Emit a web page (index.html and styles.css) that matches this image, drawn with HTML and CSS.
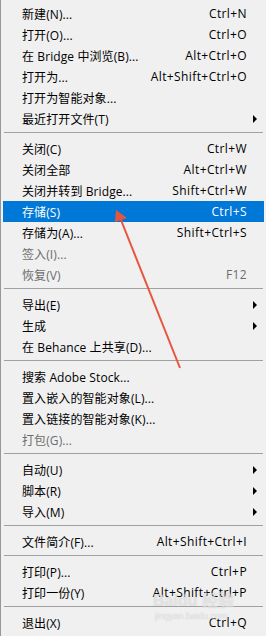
FILE: index.html
```html
<!DOCTYPE html>
<html lang="zh-CN">
<head>
    <meta charset="UTF-8">
    <meta name="viewport" content="width=device-width, initial-scale=1.0">
    <title>文件菜单</title>
    <link rel="stylesheet" href="styles.css">
</head>
<body>
    <div class="menu">
        <div class="item"><span class="label">新建(N)...</span><span class="key">Ctrl+N</span><span class="sub"></span></div>
        <div class="item"><span class="label">打开(O)...</span><span class="key">Ctrl+O</span><span class="sub"></span></div>
        <div class="item"><span class="label">在 Bridge 中浏览(B)...</span><span class="key">Alt+Ctrl+O</span><span class="sub"></span></div>
        <div class="item"><span class="label">打开为...</span><span class="key">Alt+Shift+Ctrl+O</span><span class="sub"></span></div>
        <div class="item"><span class="label">打开为智能对象...</span><span class="key"></span><span class="sub"></span></div>
        <div class="item"><span class="label">最近打开文件(T)</span><span class="key"></span><span class="sub"><i class="tri"></i></span></div>
        <div class="sep"></div>
        <div class="item"><span class="label">关闭(C)</span><span class="key">Ctrl+W</span><span class="sub"></span></div>
        <div class="item"><span class="label">关闭全部</span><span class="key">Alt+Ctrl+W</span><span class="sub"></span></div>
        <div class="item"><span class="label">关闭并转到 Bridge...</span><span class="key">Shift+Ctrl+W</span><span class="sub"></span></div>
        <div class="item active"><span class="label">存储(S)</span><span class="key">Ctrl+S</span><span class="sub"></span></div>
        <div class="item"><span class="label">存储为(A)...</span><span class="key">Shift+Ctrl+S</span><span class="sub"></span></div>
        <div class="item disabled"><span class="label">签入(I)...</span><span class="key"></span><span class="sub"></span></div>
        <div class="item disabled"><span class="label">恢复(V)</span><span class="key">F12</span><span class="sub"></span></div>
        <div class="sep"></div>
        <div class="item"><span class="label">导出(E)</span><span class="key"></span><span class="sub"><i class="tri"></i></span></div>
        <div class="item"><span class="label">生成</span><span class="key"></span><span class="sub"><i class="tri"></i></span></div>
        <div class="item"><span class="label">在 Behance 上共享(D)...</span><span class="key"></span><span class="sub"></span></div>
        <div class="sep"></div>
        <div class="item"><span class="label">搜索 Adobe Stock...</span><span class="key"></span><span class="sub"></span></div>
        <div class="item"><span class="label">置入嵌入的智能对象(L)...</span><span class="key"></span><span class="sub"></span></div>
        <div class="item"><span class="label">置入链接的智能对象(K)...</span><span class="key"></span><span class="sub"></span></div>
        <div class="item disabled"><span class="label">打包(G)...</span><span class="key"></span><span class="sub"></span></div>
        <div class="sep"></div>
        <div class="item"><span class="label">自动(U)</span><span class="key"></span><span class="sub"><i class="tri"></i></span></div>
        <div class="item"><span class="label">脚本(R)</span><span class="key"></span><span class="sub"><i class="tri"></i></span></div>
        <div class="item"><span class="label">导入(M)</span><span class="key"></span><span class="sub"><i class="tri"></i></span></div>
        <div class="sep"></div>
        <div class="item"><span class="label">文件简介(F)...</span><span class="key">Alt+Shift+Ctrl+I</span><span class="sub"></span></div>
        <div class="sep"></div>
        <div class="item"><span class="label">打印(P)...</span><span class="key">Ctrl+P</span><span class="sub"></span></div>
        <div class="item"><span class="label">打印一份(Y)</span><span class="key">Alt+Shift+Ctrl+P</span><span class="sub"></span></div>
        <div class="sep"></div>
        <div class="item"><span class="label">退出(X)</span><span class="key">Ctrl+Q</span><span class="sub"></span></div>

        <!-- annotation arrow drawn over the menu -->
        <svg class="pointer" width="266" height="636" viewBox="0 0 266 636">
            <line x1="180" y1="368" x2="121" y2="220" stroke="#e8553f" stroke-width="2"/>
            <polygon points="116,210 127,218 115,222" fill="#e8553f"/>
        </svg>

        <div class="watermark">
            <div class="wm-logo">Baidu 经验</div>
            <div class="wm-url">jingyan.baidu.com</div>
        </div>
    </div>
</body>
</html>
```

FILE: styles.css
```css
body {
    margin: 0;
    background-color: #ffffff;
    font-family: "Open Sans", "Noto Sans CJK SC", sans-serif;
    font-size: 12px;
}
.menu {
    position: relative;
    width: 261px;
    height: 630px;
    padding: 3px 2px;
    background-color: #f0f0f0;
    border-left: 1px solid #979797;
    border-right: 1px solid #979797;
}
.item {
    display: flex;
    align-items: center;
    height: 21px;
    padding-left: 19px;
    color: #000000;
    white-space: nowrap;
}
.item .label {
    flex: 1;
    letter-spacing: 0.1px;
}
.item .key {
    text-align: right;
    letter-spacing: 0.4px;
}
.item .sub {
    width: 17px;
    height: 21px;
    display: flex;
    align-items: center;
}
.tri {
    display: block;
    margin-left: 6px;
    width: 0;
    height: 0;
    border-top: 4px solid transparent;
    border-bottom: 4px solid transparent;
    border-left: 4px solid #000000;
}
.item.active {
    background-color: #0078d7;
    color: #ffffff;
}
.item.disabled {
    color: #6d6d6d;
}
.sep {
    height: 1px;
    margin: 3px 1px 5px 1px;
    background-color: #a0a0a0;
}
.pointer {
    position: absolute;
    left: -1px;
    top: 0;
}
.watermark {
    position: absolute;
    left: 152px;
    top: 592px;
    color: rgba(255, 255, 255, 0.5);
    text-shadow: 0 0 1px rgba(140, 140, 140, 0.45);
    font-family: "Liberation Sans", "Noto Sans CJK SC", sans-serif;
}
.wm-logo {
    font-size: 16px;
    font-weight: bold;
    line-height: 18px;
}
.wm-url {
    font-size: 9px;
    line-height: 12px;
    padding-left: 2px;
}
```
